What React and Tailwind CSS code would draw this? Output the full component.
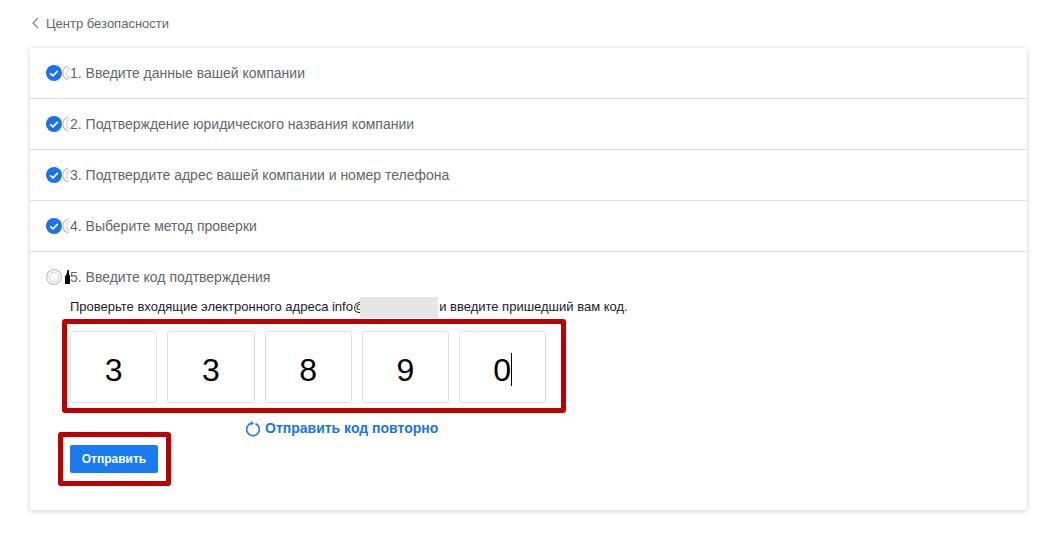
function Check() {
  return (
    <span className="flex items-center shrink-0">
      <svg width="16" height="16" viewBox="0 0 16 16" className="shrink-0">
        <circle cx="8" cy="8" r="8" fill="#1a73e8" />
        <path d="M4.2 8.3 L7 10.8 L11.8 5.9" fill="none" stroke="#fff" strokeWidth="1.8" />
      </svg>
      <svg width="8" height="16" viewBox="0 0 8 16" className="shrink-0">
        <path d="M6.5 1 A7.2 7.2 0 0 0 6.5 15" fill="none" stroke="#bdbdbd" strokeWidth="1.1" />
        <path d="M8 3 A5.4 5.4 0 0 0 8 13" fill="none" stroke="#cfcfcf" strokeWidth="1.1" />
      </svg>
    </span>
  );
}

function DoneStep({ text }) {
  return (
    <div className="h-[51px] flex items-center pl-4 border-b border-[#dcdce0]">
      <Check />
      <span className="text-[14px] text-[#63666b] leading-none">{text}</span>
    </div>
  );
}

function CodeBox({ value, caret }) {
  return (
    <div className="w-[87.25px] h-[72px] pt-[5px] rounded-[3px] border border-[#dfdfe3] bg-white flex items-center justify-center text-[32px] text-black">
      <span>{value}</span>
      {caret && <span className="w-px h-[33px] bg-black" />}
    </div>
  );
}

export default function App() {
  return (
    <div className="w-[1055px] h-[538px] bg-white overflow-hidden font-['Liberation_Sans',Arial,sans-serif]">
      <div className="pl-[30px] pr-[28px]">
        <div className="h-[48px] flex items-center">
          <svg width="9" height="12" viewBox="0 0 9 12" className="ml-[1px] -mt-[2px] shrink-0">
            <path d="M7 1 L2 6 L7 11" fill="none" stroke="#8a8d92" strokeWidth="1.4" />
          </svg>
          <span className="ml-[6px] text-[13px] text-[#63666b]">Центр безопасности</span>
        </div>
        <div className="bg-white rounded-[2px] shadow-[0_1px_5px_rgba(0,0,0,0.2)] h-[462px]">
          <DoneStep text="1. Введите данные вашей компании" />
          <DoneStep text="2. Подтверждение юридического названия компании" />
          <DoneStep text="3. Подтвердите адрес вашей компании и номер телефона" />
          <DoneStep text="4. Выберите метод проверки" />
          <div className="pl-4">
            <div className="h-[49px] flex items-center">
              <svg width="16" height="16" viewBox="0 0 16 16" className="shrink-0">
                <circle cx="8" cy="8" r="7.4" fill="none" stroke="#c4c4c4" strokeWidth="1.2" />
                <circle cx="8" cy="8" r="4.9" fill="none" stroke="#d0d0d0" strokeWidth="1" />
              </svg>
              <svg width="8" height="16" viewBox="0 0 8 16" className="shrink-0">
                <path d="M3 15 L3 7.5 L4.6 5 L5.6 1 L7 1 L7 5.5 L8 6.5 L8 15 Z" fill="#000" />
              </svg>
              <span className="text-[14px] text-[#63666b] leading-none">5. Введите код подтверждения</span>
            </div>
            <div className="-mt-[4px] ml-[24px] h-[20px] flex items-center text-[13px] text-[#202124]">
              <span>Проверьте входящие электронного адреса info@</span>
              <span className="w-[78px] h-[21px] -ml-[6px] bg-[#e6e6e6] shrink-0" />
              <span className="ml-[1px]">и введите пришедший вам код.</span>
            </div>
            <div className="mt-[2px] ml-[16px] w-[504px] h-[94px] border-[5px] border-[#bd0000] rounded-[3px] flex items-center gap-[10px] pl-[3px] pt-[2px] box-border">
              <CodeBox value="3" />
              <CodeBox value="3" />
              <CodeBox value="8" />
              <CodeBox value="9" />
              <CodeBox value="0" caret />
            </div>
            <div className="mt-[5px] ml-[199px] flex items-center gap-[5px] text-[14px] font-bold text-[#1a73e8]">
              <svg width="15" height="16" viewBox="0 0 15 16" className="shrink-0">
                <path d="M10.5 2.6 A6.3 6.3 0 1 1 6.8 2.2" fill="none" stroke="#2a7de8" strokeWidth="1.7" />
                <path d="M6 0 L9 2.2 L6 4.4 Z" fill="#2a7de8" />
              </svg>
              <span>Отправить код повторно</span>
            </div>
            <div className="-mt-[7px] ml-[11.5px] w-[113px] h-[54px] border-[5px] border-[#bd0000] rounded-[3px] flex items-center pl-[7.5px] box-border">
              <button className="w-[88px] h-[28px] bg-[#1a7bf0] rounded-[2px] text-white text-[12px] font-bold">Отправить</button>
            </div>
          </div>
        </div>
      </div>
    </div>
  );
}
